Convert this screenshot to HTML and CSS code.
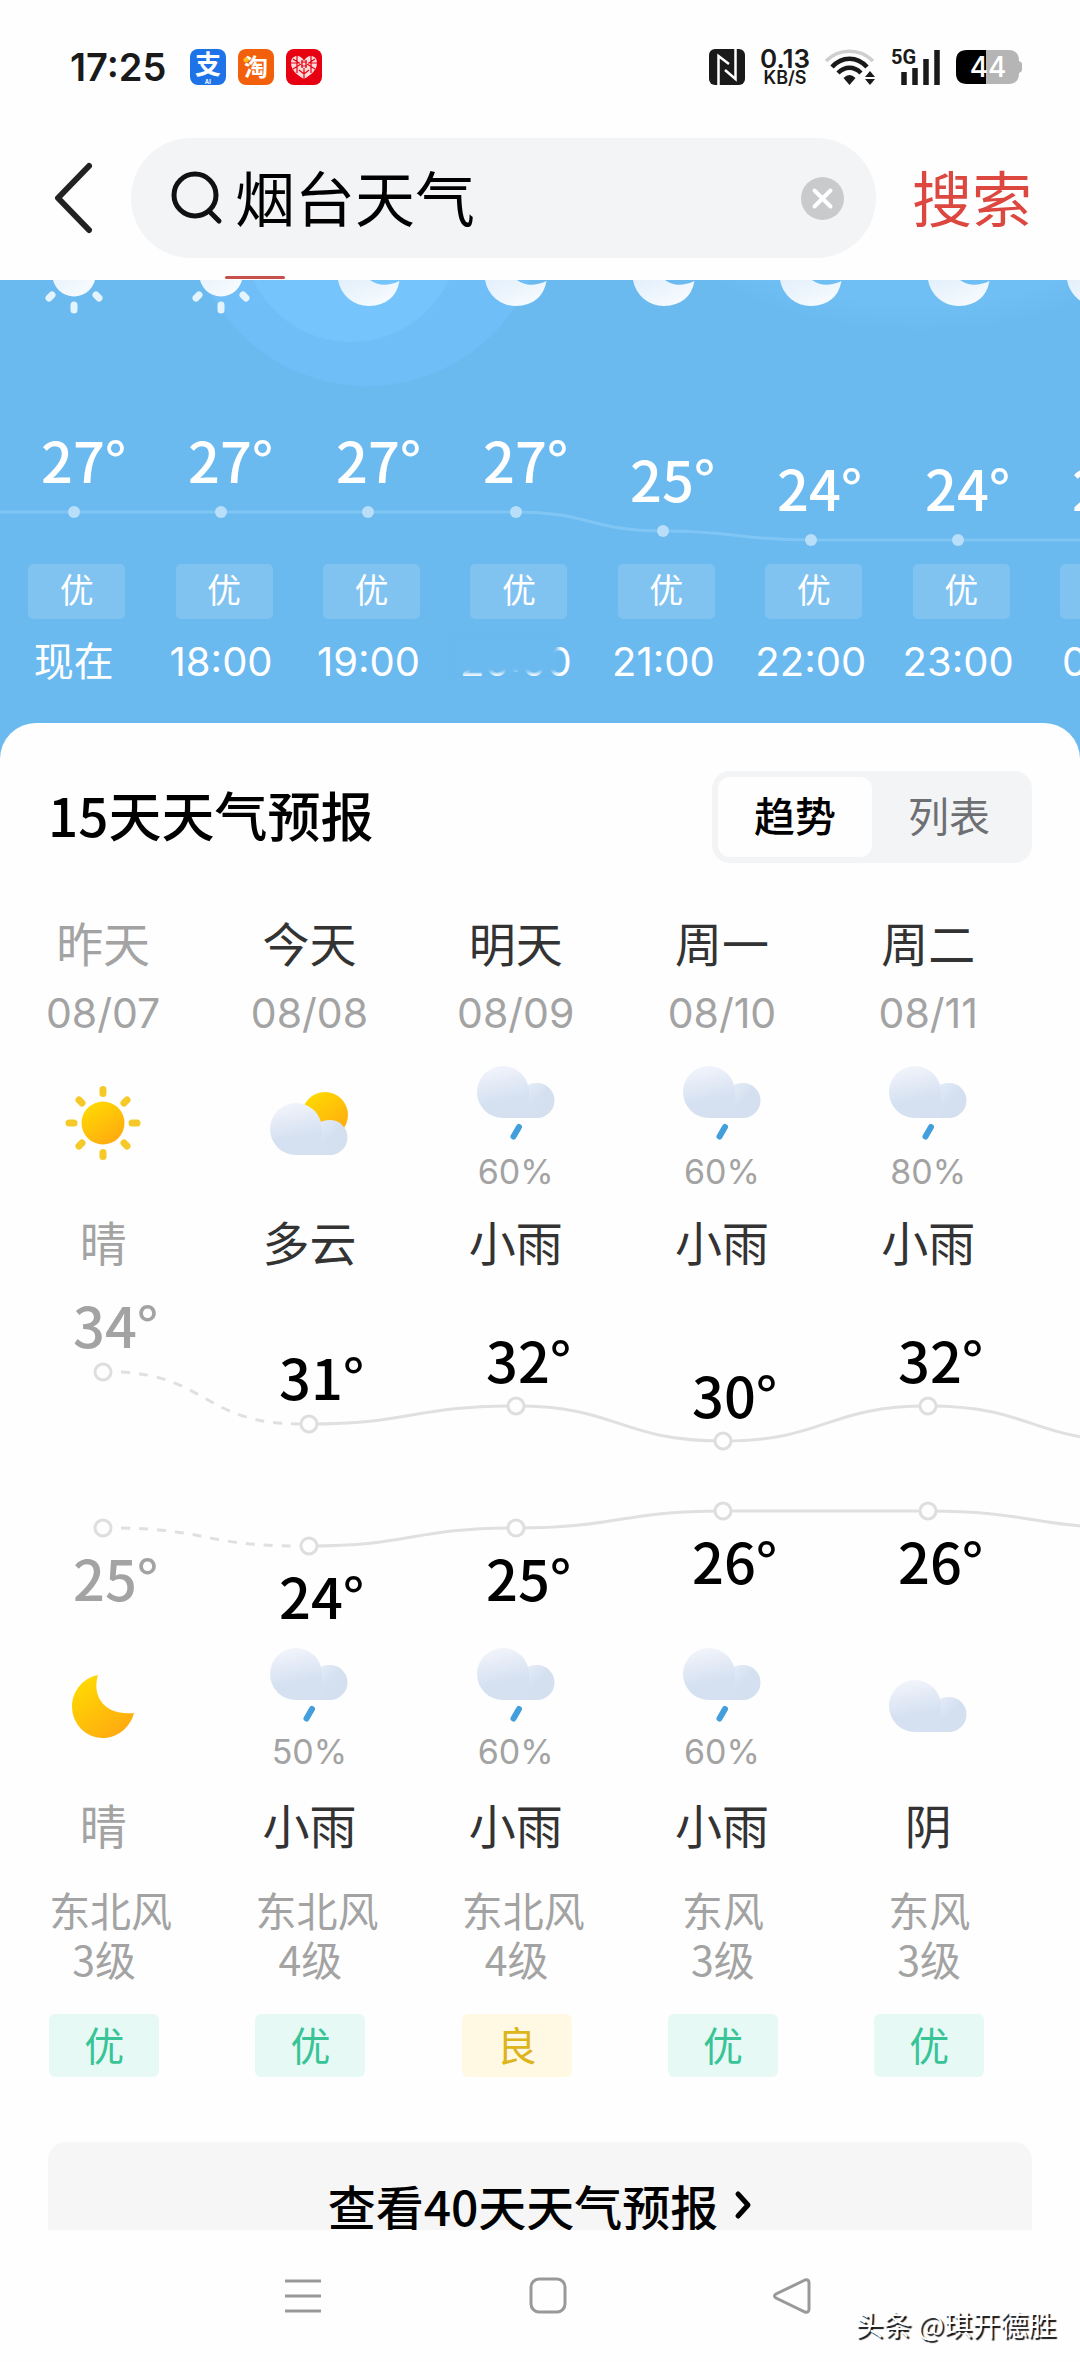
FILE: index.html
```html
<!DOCTYPE html>
<html lang="zh-CN">
<head>
  <meta charset="UTF-8" />
  <meta name="viewport" content="width=device-width, initial-scale=1.0"/>
  <title>烟台天气</title>
  <link rel="stylesheet" href="styles.css">
</head>
<body>

  <!-- shared weather icons -->
  <svg class="defs" aria-hidden="true">
    <defs>
      <linearGradient id="gold" x1="0" y1="0" x2="0.7" y2="1">
        <stop offset="0" stop-color="#ffe000"/>
        <stop offset="1" stop-color="#ffaa10"/>
      </linearGradient>
      <linearGradient id="puff" x1="0.4" y1="0" x2="0.6" y2="1">
        <stop offset="0" stop-color="#f2f4fb"/>
        <stop offset="0.65" stop-color="#d5e1f1"/>
        <stop offset="1" stop-color="#d5e1f1"/>
      </linearGradient>
      <linearGradient id="puff-small" x1="0" y1="0.2" x2="0.6" y2="0.6">
        <stop offset="0" stop-color="#eef3fb"/>
        <stop offset="1" stop-color="#d4e0f0"/>
      </linearGradient>
      <linearGradient id="frost" x1="0" y1="0" x2="1" y2="1">
        <stop offset="0" stop-color="#e2effb"/>
        <stop offset="1" stop-color="#fafdff"/>
      </linearGradient>
      <symbol id="cloud" viewBox="0 0 78 52">
        <path d="M60 17a17.500 17.500 0 0 1 0 35H26V40L46 22Q52 17 60 17z" fill="url(#puff-small)"/>
        <path d="M26 0a26 26 0 0 1 26 26q0 15-1 26H26a26 26 0 0 1 0-52z" fill="url(#puff)"/>
      </symbol>
      <symbol id="rain" viewBox="0 0 90 90">
        <use href="#cloud" x="6" y="4" width="78" height="52"/>
        <path d="M48 65l-5.500 9.500" stroke="#429fdb" stroke-width="6" stroke-linecap="round"/>
      </symbol>
      <symbol id="sun" viewBox="0 0 90 90">
        <circle cx="45" cy="41" r="21.500" fill="url(#gold)"/>
        <g stroke="#f5c927" stroke-width="7" stroke-linecap="round">
          <path d="M45 7.500v4M45 70.500v4M11 41h5M74 41h5M21 18l3 3M66 61l3 3M21 64l3-3M66 21l3-3"/>
        </g>
      </symbol>
      <symbol id="partly" viewBox="0 0 90 90">
        <circle cx="61" cy="33" r="23" fill="url(#gold)"/>
        <use href="#cloud" x="6" y="21" width="78" height="52"/>
      </symbol>
      <symbol id="overcast" viewBox="0 0 90 90">
        <use href="#cloud" x="6" y="18" width="78" height="52"/>
      </symbol>
      <symbol id="moon" viewBox="0 0 90 90">
        <path d="M40 13C34 32 44 54 76 51C72 66 59 76 45 76A31 31 0 0 1 14 45C14 29 25 16 40 13z" fill="url(#gold)"/>
      </symbol>
      <symbol id="hour-sun" viewBox="0 0 60 40">
        <circle cx="30" cy="-5" r="21.500" fill="url(#frost)"/>
        <path d="M30 25v5M8 15l-3 3M52 15l3 3" stroke="#e4f4fd" stroke-width="7" stroke-linecap="round"/>
      </symbol>
      <symbol id="hour-moon" viewBox="0 0 64 40">
        <path d="M1 0A31 31 0 0 0 32 26Q58 25 62.500 1Q45 9 33 0z" fill="url(#frost)"/>
      </symbol>
    </defs>
  </svg>

  <header class="statusbar">
    <span class="clock">17:25</span>
    <svg class="app-icon" viewBox="0 0 36 36">
      <rect width="36" height="36" rx="8" fill="#1f73e8"/>
      <text x="18" y="25" class="app-text app-text-lg">支</text>
      <text x="18" y="35" class="app-text app-text-sm">AI</text>
    </svg>
    <svg class="app-icon" viewBox="0 0 36 36">
      <rect width="36" height="36" rx="8" fill="#f2600c"/>
      <text x="18" y="27" class="app-text">淘</text>
      <circle cx="8" cy="11" r="2.500" fill="#ffc21a"/>
    </svg>
    <svg class="app-icon" viewBox="0 0 36 36">
      <rect width="36" height="36" rx="8" fill="#e60012"/>
      <path d="M18 30C11 26 5 21 5 14C5 9 8 7 11 7C14 7 17 9 18 12C19 9 22 7 25 7C28 7 31 9 31 14C31 21 25 26 18 30z" fill="#fbdcdc"/>
      <path d="M11 7v17M25 7v17M5 14h9M22 14h9M7 20l8-5M29 20l-8-5M18 19v11M13 21l5 4 5-4M7 10l6 4M29 10l-6 4M15 13h6M15 17h6M16 11v8M20 11v8" stroke="#e60012" stroke-width="1.200" fill="none"/>
    </svg>

    <div class="status-right">
      <svg width="36" height="36" viewBox="0 0 36 36">
        <rect width="36" height="36" rx="6" fill="#1a1a1a"/>
        <path d="M9.500 36V7L20 15M26.500 0V30L16 21" fill="none" stroke="#fff" stroke-width="2.500"/>
      </svg>
      <div class="speed"><b>0.13</b><span>KB/S</span></div>
      <svg width="51" height="36" viewBox="0 0 51 36">
        <g fill="none" stroke="#1a1a1a" stroke-width="4.500">
          <path d="M1 12C14 -1 35 -1 48 12" stroke="#cfcfcf" stroke-width="3.500"/>
          <path d="M7 18C17 7 32 7 42 18"/>
          <path d="M13 24C20 17 29 17 36 24"/>
        </g>
        <path d="M24.500 36l-6-7q6-6 12 0z" fill="#1a1a1a"/>
        <path d="M40 28l5-6 5 6zM40 30h10l-5 6z" fill="#1a1a1a"/>
      </svg>
      <svg width="50" height="38" viewBox="0 0 50 38">
        <text x="0" y="16" class="net-text">5G</text>
        <path d="M13 24v13M24 20v17M35 11v26M46 2v35" stroke="#1a1a1a" stroke-width="5.500"/>
      </svg>
      <svg width="66" height="34" viewBox="0 0 66 34">
        <path d="M30 0H11Q0 0 0 11V23Q0 34 11 34H30z" fill="#000"/>
        <path d="M30 0H52Q63 0 63 11Q66 12 66 14V20Q66 22 63 23Q63 34 52 34H30z" fill="#b5b5b5"/>
        <text x="32" y="27" class="battery-text">44</text>
      </svg>
    </div>
  </header>

  <form class="searchbar">
    <button type="button" class="back" aria-label="返回">
      <svg width="40" height="74" viewBox="0 0 40 74"><path d="M35 5L4 37L35 69" fill="none" stroke="#222" stroke-width="6" stroke-linecap="round" stroke-linejoin="round"/></svg>
    </button>
    <div class="search-box">
      <svg width="54" height="54" viewBox="0 0 54 54"><circle cx="24" cy="24" r="21" fill="none" stroke="#111" stroke-width="5"/><path d="M38 40l10 10" stroke="#111" stroke-width="5" stroke-linecap="round"/></svg>
      <input type="text" value="烟台天气" aria-label="搜索内容">
      <button type="button" aria-label="清空">
        <svg width="43" height="43" viewBox="0 0 43 43"><circle cx="21.500" cy="21.500" r="21.500" fill="#c9cacc"/><path d="M13.500 13.500l16 16M29.500 13.500l-16 16" stroke="#fff" stroke-width="4" stroke-linecap="round"/></svg>
      </button>
    </div>
    <button type="submit" class="search-btn">搜索</button>
  </form>
  <div class="tab-strip"><span class="tab-line"></span></div>

  <main class="page">
    <section class="hourly">
      <svg class="hourly-chart" viewBox="0 0 1080 284">
        <use href="#hour-sun" x="44" y="0" width="60" height="40"/>
        <use href="#hour-sun" x="191" y="0" width="60" height="40"/>
        <use href="#hour-moon" x="337" y="0" width="64" height="40"/>
        <use href="#hour-moon" x="484" y="0" width="64" height="40"/>
        <use href="#hour-moon" x="632" y="0" width="64" height="40"/>
        <use href="#hour-moon" x="779" y="0" width="64" height="40"/>
        <use href="#hour-moon" x="927" y="0" width="64" height="40"/>
        <use href="#hour-moon" x="1066" y="0" width="64" height="40"/>
        <path class="hour-line" d="M0 232H516C590 232 590 251 663 251C737 251 737 260 811 260H1080"/>
        <g class="hour-dots">
          <circle cx="74" cy="232" r="6"/>
          <circle cx="221" cy="232" r="6"/>
          <circle cx="368" cy="232" r="6"/>
          <circle cx="516" cy="232" r="6"/>
          <circle cx="663" cy="251" r="6"/>
          <circle cx="811" cy="260" r="6"/>
          <circle cx="958" cy="260" r="6"/>
        </g>
        <g class="temp hour-temp">
          <text x="41" y="203">27°</text>
          <text x="188" y="203">27°</text>
          <text x="336" y="203">27°</text>
          <text x="483" y="203">27°</text>
          <text x="630" y="222">25°</text>
          <text x="777" y="231">24°</text>
          <text x="925" y="231">24°</text>
          <text x="1072" y="231">24°</text>
        </g>
      </svg>
      <ul class="hours">
        <li><span class="hour-air">优</span><time>现在</time></li>
        <li><span class="hour-air">优</span><time>18:00</time></li>
        <li><span class="hour-air">优</span><time>19:00</time></li>
        <li><span class="hour-air">优</span><time class="smudged">20:00</time></li>
        <li><span class="hour-air">优</span><time>21:00</time></li>
        <li><span class="hour-air">优</span><time>22:00</time></li>
        <li><span class="hour-air">优</span><time>23:00</time></li>
        <li><span class="hour-air">优</span><time>0:00</time></li>
      </ul>
    </section>

    <section class="sheet">
      <div class="sheet-head">
        <h2>15天天气预报</h2>
        <div class="toggle">
          <button type="button" class="active">趋势</button>
          <button type="button">列表</button>
        </div>
      </div>

      <ul class="days">
        <li class="past">
          <span class="name">昨天</span><span class="date">08/07</span>
          <div class="icon"><svg><use href="#sun"/></svg></div>
          <span class="name">晴</span>
        </li>
        <li>
          <span class="name">今天</span><span class="date">08/08</span>
          <div class="icon"><svg><use href="#partly"/></svg></div>
          <span class="name">多云</span>
        </li>
        <li>
          <span class="name">明天</span><span class="date">08/09</span>
          <div class="icon"><svg><use href="#rain"/></svg><span>60%</span></div>
          <span class="name">小雨</span>
        </li>
        <li>
          <span class="name">周一</span><span class="date">08/10</span>
          <div class="icon"><svg><use href="#rain"/></svg><span>60%</span></div>
          <span class="name">小雨</span>
        </li>
        <li>
          <span class="name">周二</span><span class="date">08/11</span>
          <div class="icon"><svg><use href="#rain"/></svg><span>80%</span></div>
          <span class="name">小雨</span>
        </li>
      </ul>

      <svg class="trend" viewBox="0 0 1080 373">
        <g class="trend-line">
          <path class="dashed" d="M121 101C206 105 206 153 300 153"/>
          <path d="M309 153C412 153 412 135 516 135C619 135 619 170 723 170C826 170 826 135 928 135C1032 135 1032 170 1135 170"/>
          <path class="dashed" d="M121 257C206 258 206 275 300 275"/>
          <path d="M309 275C412 275 412 257 516 257C619 257 619 240 723 240H928C1032 240 1032 257 1135 257"/>
        </g>
        <g class="trend-dots">
          <circle cx="103" cy="101" r="8"/>
          <circle cx="309" cy="153" r="8"/>
          <circle cx="516" cy="135" r="8"/>
          <circle cx="723" cy="170" r="8"/>
          <circle cx="928" cy="135" r="8"/>
          <circle cx="103" cy="257" r="8"/>
          <circle cx="309" cy="275" r="8"/>
          <circle cx="516" cy="257" r="8"/>
          <circle cx="723" cy="240" r="8"/>
          <circle cx="928" cy="240" r="8"/>
        </g>
        <g class="temp">
          <text class="past" x="73" y="77">34°</text>
          <text x="279" y="129">31°</text>
          <text x="486" y="112">32°</text>
          <text x="692" y="147">30°</text>
          <text x="898" y="112">32°</text>
          <text class="past" x="73" y="330">25°</text>
          <text x="279" y="348">24°</text>
          <text x="486" y="330">25°</text>
          <text x="692" y="313">26°</text>
          <text x="898" y="313">26°</text>
        </g>
      </svg>

      <ul class="days nights">
        <li class="past">
          <div class="icon"><svg><use href="#moon"/></svg></div>
          <span class="name">晴</span>
          <div class="wind">东北风<br>3级</div><span class="air">优</span>
        </li>
        <li>
          <div class="icon"><svg><use href="#rain"/></svg><span>50%</span></div>
          <span class="name">小雨</span>
          <div class="wind">东北风<br>4级</div><span class="air">优</span>
        </li>
        <li>
          <div class="icon"><svg><use href="#rain"/></svg><span>60%</span></div>
          <span class="name">小雨</span>
          <div class="wind">东北风<br>4级</div><span class="air fair">良</span>
        </li>
        <li>
          <div class="icon"><svg><use href="#rain"/></svg><span>60%</span></div>
          <span class="name">小雨</span>
          <div class="wind">东风<br>3级</div><span class="air">优</span>
        </li>
        <li>
          <div class="icon"><svg><use href="#overcast"/></svg></div>
          <span class="name">阴</span>
          <div class="wind">东风<br>3级</div><span class="air">优</span>
        </li>
      </ul>

      <a class="more" href="#">查看40天天气预报<svg width="18" height="30" viewBox="0 0 18 30"><path d="M4 4l10 11L4 26" fill="none" stroke="#000" stroke-width="5" stroke-linecap="round" stroke-linejoin="round"/></svg></a>
    </section>
  </main>

  <nav class="navbar">
    <button type="button" aria-label="最近任务"><svg width="40" height="40" viewBox="0 0 40 40"><path d="M2 5h36M2 20h36M2 35h36"/></svg></button>
    <button type="button" aria-label="主屏幕"><svg width="40" height="40" viewBox="0 0 40 40"><rect x="3" y="3" width="34" height="33" rx="8"/></svg></button>
    <button type="button" aria-label="后退"><svg width="40" height="40" viewBox="0 0 40 40"><path d="M33 4L4 18Q1 20 4 22L33 36Q37 37 37 33V7Q37 3 33 4z"/></svg></button>
  </nav>
  <div class="watermark">头条 @琪开德胜</div>

</body>
</html>
```

FILE: styles.css
```css
* {
  box-sizing: border-box;
}

body {
  font-family: "Noto Sans CJK SC", sans-serif;
  background-color: #fefefe;
  color: #000;
  margin: 0;
  height: 100vh;
  display: flex;
  flex-direction: column;
  position: relative;
  overflow: hidden;
}

ul {
  list-style: none;
  margin: 0;
  padding: 0;
}

button {
  font-family: inherit;
  border: none;
  background: none;
  padding: 0;
  cursor: pointer;
}

svg {
  display: block;
}

.defs {
  position: absolute;
  width: 0;
  height: 0;
}

/* status bar */
.statusbar {
  flex: none;
  height: 134px;
  padding: 0 58px 0 70px;
  display: flex;
  align-items: center;
  gap: 12px;
}

.clock {
  font-family: Inter, sans-serif;
  font-size: 38px;
  font-weight: 600;
  color: #1a1a1a;
  margin-right: 12px;
}

.app-icon {
  width: 36px;
  height: 36px;
  overflow: visible;
}

.app-text {
  font-size: 24px;
  font-weight: 700;
  fill: #fff;
  text-anchor: middle;
}

.app-text-lg {
  font-size: 26px;
}

.app-text-sm {
  font-size: 6px;
}

.status-right {
  margin-left: auto;
  display: flex;
  align-items: center;
  gap: 15px;
}

.speed {
  display: flex;
  flex-direction: column;
  align-items: center;
  font-family: Inter, sans-serif;
  font-weight: 600;
  color: #1a1a1a;
}

.speed b {
  font-size: 26px;
  line-height: 22px;
  font-weight: 600;
}

.speed span {
  font-size: 18px;
  line-height: 16px;
}

.net-text {
  font-family: Roboto, sans-serif;
  font-size: 20px;
  font-weight: 700;
  fill: #1a1a1a;
}

.battery-text {
  font-family: Inter, sans-serif;
  font-size: 28px;
  font-weight: 500;
  fill: #fff;
  text-anchor: middle;
}

/* search */
.searchbar {
  flex: none;
  height: 128px;
  padding: 0 48px 0 54px;
  display: flex;
  align-items: center;
}

.back {
  width: 77px;
}

.search-box {
  flex: 1;
  min-width: 0;
  height: 120px;
  padding: 0 32px 0 40px;
  border-radius: 60px;
  background-color: #f3f4f6;
  display: flex;
  align-items: center;
}

.search-box input {
  flex: 1;
  min-width: 0;
  border: none;
  outline: none;
  background: none;
  padding: 0 0 6px 10px;
  font-family: inherit;
  font-size: 60px;
  color: #000;
}

.search-btn {
  margin-left: 36px;
  padding-bottom: 6px;
  font-size: 60px;
  color: #dc4840;
}

.tab-strip {
  flex: none;
  height: 18px;
  padding-left: 225px;
  padding-top: 14px;
}

.tab-line {
  display: block;
  width: 60px;
  height: 3px;
  border-radius: 2px;
  background-color: #c8504c;
}

.page {
  flex: 1;
  min-height: 0;
  overflow: hidden;
}

/* hourly strip */
.hourly {
  padding-bottom: 72px;
  overflow: hidden;
  background:
    radial-gradient(circle at 351px -46px, #75c4fc 107px, transparent 109px),
    radial-gradient(circle at 367px -72px, #70bef7 177px, transparent 179px),
    radial-gradient(circle at 919px -387px, #6fbef4 410px, transparent 441px),
    #6ab9ef;
}

.hourly-chart {
  width: 100%;
}

.hour-line {
  fill: none;
  stroke: #7fc6f5;
  stroke-width: 3;
}

.hour-dots {
  fill: #b9defa;
}

.temp {
  font-size: 56px;
  font-weight: 500;
}

.hour-temp {
  fill: #fff;
}

.hours {
  display: flex;
  color: #fff;
}

.hours li {
  flex: 0 0 13.65%;
  display: flex;
  flex-direction: column;
  align-items: center;
  gap: 18px;
}

.hour-air {
  width: 97px;
  height: 55px;
  margin-left: 6px;
  border-radius: 5px;
  background-color: rgba(255, 255, 255, 0.15);
  font-size: 34px;
  line-height: 50px;
  text-align: center;
}

.hours time {
  font-family: Inter, "Noto Sans CJK SC", sans-serif;
  font-size: 40px;
  line-height: 50px;
}

.smudged {
  position: relative;
}

.smudged::after {
  content: "";
  position: absolute;
  left: -6px;
  right: 14px;
  top: 2px;
  bottom: 14px;
  background-color: #6ab9ef;
  filter: blur(2px);
}

/* 15 day sheet */
.sheet {
  margin-top: -36px;
  padding-top: 48px;
  border-radius: 36px 36px 0 0;
  background-color: #fefefe;
  position: relative;
}

.sheet-head {
  display: flex;
  justify-content: space-between;
  align-items: center;
  padding: 0 48px;
}

.sheet-head h2 {
  margin: 0;
  padding-bottom: 6px;
  font-size: 53px;
  line-height: 80px;
  font-weight: 500;
}

.toggle {
  display: flex;
  padding: 6px;
  border-radius: 18px;
  background-color: #f3f4f6;
}

.toggle button {
  width: 154px;
  height: 80px;
  padding-bottom: 6px;
  border-radius: 12px;
  font-size: 41px;
  color: #6e6f73;
}

.toggle .active {
  background-color: #fefefe;
  color: #000;
  font-weight: 500;
}

.days {
  display: flex;
  margin-top: 49px;
}

.days li {
  flex: 0 0 19.1%;
  display: flex;
  flex-direction: column;
  align-items: center;
}

.name {
  font-size: 47px;
  line-height: 60px;
  color: #333;
}

.past .name {
  color: #a3a3a3;
}

.date {
  margin-top: 16px;
  font-family: Inter, sans-serif;
  font-size: 41px;
  line-height: 50px;
  color: #a3a3a3;
}

.icon {
  height: 130px;
  margin: 24px 0 19px;
  font-family: Inter, sans-serif;
  font-size: 34px;
  line-height: 40px;
  text-align: center;
  color: #a3a3a3;
}

.icon svg {
  width: 90px;
  height: 90px;
}

.icon svg:only-child {
  margin-top: 20px;
}

.trend {
  width: 100%;
}

.trend-line {
  fill: none;
  stroke: #e0e0e0;
  stroke-width: 3;
}

.dashed {
  stroke-dasharray: 9 9;
}

.trend-dots {
  fill: #fefefe;
  stroke: #dedede;
  stroke-width: 3;
}

.temp .past {
  fill: #a3a3a3;
}

.nights {
  margin-top: 0;
}

.nights .icon {
  margin: 0 0 20px;
  line-height: 36px;
}

.nights .icon svg:only-child {
  margin-top: 18px;
}

.wind {
  width: 110px;
  margin-left: 2px;
  margin-top: 31px;
  font-size: 41px;
  line-height: 49px;
  text-align: center;
  white-space: nowrap;
  color: #a3a3a3;
}

.air {
  width: 110px;
  height: 63px;
  margin-left: 2px;
  margin-top: 31px;
  border-radius: 6px;
  background-color: #e7f9f5;
  color: #38c496;
  font-size: 40px;
  line-height: 60px;
  text-align: center;
}

.fair {
  background-color: #fff9e4;
  color: #dcb41c;
}

.more {
  display: flex;
  justify-content: center;
  align-items: center;
  gap: 16px;
  height: 130px;
  margin: 65px 48px 0;
  padding-bottom: 4px;
  border-radius: 18px;
  background-color: #f6f6f7;
  color: #000;
  font-size: 48px;
  font-weight: 500;
  text-decoration: none;
}

/* bottom navigation */
.navbar {
  flex: none;
  height: 132px;
  padding: 0 268px 0 283px;
  display: flex;
  justify-content: space-between;
  align-items: center;
}

.navbar svg {
  fill: none;
  stroke: #999;
  stroke-width: 3;
}

.watermark {
  position: absolute;
  right: 24px;
  bottom: 18px;
  font-size: 28px;
  line-height: 40px;
  color: #fff;
  text-shadow: 2px 2px 1px #111;
}
```
